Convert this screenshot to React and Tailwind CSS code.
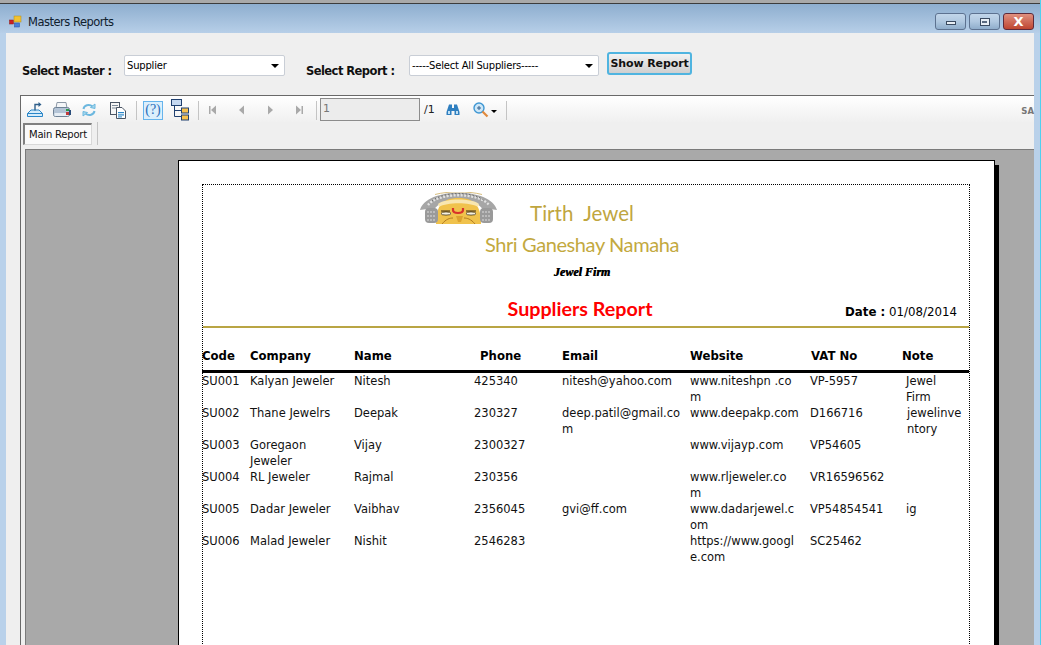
import React from 'react';

const uiFont = { fontFamily: '"DejaVu Sans", sans-serif' };

const rows = [
  { code: 'SU001', company: 'Kalyan Jeweler', name: 'Nitesh', phone: '425340', email: 'nitesh@yahoo.com', website: ['www.niteshpn .co', 'm'], vat: 'VP-5957', note: ['Jewel', 'Firm'], noteClass: 'pl-[4px]' },
  { code: 'SU002', company: 'Thane Jewelrs', name: 'Deepak', phone: '230327', email: ['deep.patil@gmail.co', 'm'], website: ['www.deepakp.com'], vat: 'D166716', note: ['jewelinve', 'ntory'], noteClass: 'pl-[5px]' },
  { code: 'SU003', company: ['Goregaon', 'Jeweler'], name: 'Vijay', phone: '2300327', email: '', website: ['www.vijayp.com'], vat: 'VP54605', note: [] },
  { code: 'SU004', company: 'RL Jeweler', name: 'Rajmal', phone: '230356', email: '', website: ['www.rljeweler.co', 'm'], vat: 'VR16596562', note: [] },
  { code: 'SU005', company: 'Dadar Jeweler', name: 'Vaibhav', phone: '2356045', email: 'gvi@ff.com', website: ['www.dadarjewel.c', 'om'], vat: 'VP54854541', note: ['ig'], noteClass: 'pl-[4px]' },
  { code: 'SU006', company: 'Malad Jeweler', name: 'Nishit', phone: '2546283', email: '', website: ['https://www.googl', 'e.com'], vat: 'SC25462', note: [] },
];

const gridCols = 'grid grid-cols-[48px_104px_120px_88px_128px_120px_92px_67px]';

const Lines = ({ value, className = '' }) => {
  const lines = Array.isArray(value) ? value : [value];
  return (
    <div className={`whitespace-nowrap ${className}`}>
      {lines.map((l, i) => <div key={i}>{l}</div>)}
    </div>
  );
};

const ComboBox = ({ label, width }) => (
  <div className={`${width} h-[21px] bg-white border border-[#c9ced6] rounded-[2px] flex items-start justify-between pl-[2px] pr-[5px] text-[10px] leading-[19px] text-black tracking-[-0.2px]`} style={uiFont}>
    <span>{label}</span>
    <span className="mt-[8px] w-0 h-0 border-l-[4px] border-r-[4px] border-t-[4px] border-l-transparent border-r-transparent border-t-black"></span>
  </div>
);

const CaptionButton = ({ w, children, red }) => (
  <div className={`${w} h-[17px] rounded-[3px] border flex items-center justify-center ${red ? 'border-[#5e2a3a] bg-gradient-to-b from-[#e0907f] via-[#cf6a58] to-[#bf4530]' : 'border-[#5d7290] bg-gradient-to-b from-[#c2d6ea] via-[#b0c8e0] to-[#8fadcb]'}`}>
    {children}
  </div>
);

const Separator = ({ className = '' }) => <div className={`w-px h-[19px] bg-[#c4c4c4] ${className}`}></div>;

const NavArrow = ({ dir, bar }) => (
  <svg width="10" height="12" viewBox="0 0 10 12" fill="#a9a9a9">
    {bar && dir === 'left' && <rect x="1" y="2" width="1.5" height="8" />}
    {dir === 'left' ? <path d="M8 1.5v9L3 6z" /> : <path d="M2 1.5v9L7 6z" />}
    {bar && dir === 'right' && <rect x="7.5" y="2" width="1.5" height="8" />}
  </svg>
);

const ExportIcon = () => (
  <svg width="18" height="18" viewBox="0 0 18 18" fill="none">
    <path d="M1.5 12.5 L5 9 H13 L16.5 12.5 V15.5 H1.5 Z" fill="#d6ecfa" stroke="#2a86c8" />
    <path d="M1.5 12.5 H16.5" stroke="#2a86c8" />
    <path d="M9 9.5 V3.5 H13" stroke="#2f5f8a" strokeWidth="1.4" />
    <path d="M12.5 1 L15.5 3.5 L12.5 6 Z" fill="#2f5f8a" />
  </svg>
);

const PrintIcon = () => (
  <svg width="20" height="18" viewBox="0 0 20 18">
    <path d="M5 1.5 H14 L15 7 H4 Z" fill="#f4f6f8" stroke="#8c98a6" />
    <rect x="1.5" y="6.5" width="16" height="9" rx="2" fill="#b4c4d6" stroke="#6f8296" />
    <rect x="2.5" y="12" width="14" height="3" fill="#e6edf4" />
    <rect x="14" y="8" width="3" height="2" fill="#2d9a4a" />
    <rect x="14" y="11" width="3" height="3" fill="#c23a3a" />
    <rect x="17" y="9" width="2" height="5" fill="#2b4f7c" />
  </svg>
);

const RefreshIcon = () => (
  <svg width="16" height="16" viewBox="0 0 16 16" fill="none" stroke="#6db8df" strokeWidth="2">
    <path d="M2.5 7 C3 3.5 8 1.5 11.5 4.5" />
    <path d="M13.5 9 C13 12.5 8 14.5 4.5 11.5" />
    <path d="M9.5 5.5 L14 6.5 L14 2 Z" fill="#a6d8ee" strokeWidth="1" />
    <path d="M6.5 10.5 L2 9.5 L2 14 Z" fill="#a6d8ee" strokeWidth="1" />
  </svg>
);

const CopyIcon = () => (
  <svg width="18" height="19" viewBox="0 0 18 19">
    <rect x="1.5" y="1.5" width="9" height="12" fill="#f6f6f6" stroke="#4a5564" />
    <rect x="3" y="4" width="6" height="1" fill="#7d8a98" />
    <rect x="3" y="6.5" width="6" height="1" fill="#7d8a98" />
    <path d="M7.5 6.5 H13 L16.5 10 V17.5 H7.5 Z" fill="#fff" stroke="#4a5564" />
    <rect x="9" y="11" width="6" height="1.2" fill="#2a86c8" />
    <rect x="9" y="13.3" width="6" height="1.2" fill="#2a86c8" />
    <rect x="9" y="15.4" width="4" height="1" fill="#2a86c8" />
  </svg>
);

const ParamIcon = () => (
  <div className="w-[20px] h-[19px] ml-px mr-[7px] border border-[#66b4ec] bg-[#dcefFC] flex items-center justify-center text-[14px] leading-none text-[#2a6db8]" style={{ fontFamily: '"Liberation Serif", serif' }}>(?)</div>
);

const TreeIcon = () => (
  <svg width="20" height="22" viewBox="0 0 20 22">
    <rect x="1.5" y="0.5" width="10" height="6" fill="#c5d8f0" stroke="#1f3f6e" />
    <path d="M4.5 6.5 V17.5 H11 M4.5 11.5 H11" stroke="#1f3f6e" fill="none" />
    <rect x="11.5" y="9" width="7" height="5" fill="#f7c14e" stroke="#1f3f6e" />
    <rect x="11.5" y="16" width="7" height="5" fill="#f7c14e" stroke="#1f3f6e" />
  </svg>
);

const BinocularsIcon = () => (
  <svg width="14" height="12" viewBox="0 0 14 12" fill="#2f7fc0">
    <path d="M3 0.5 H6 V4 H8 V0.5 H11 L13.5 8 V11 H8.5 V7 H5.5 V11 H0.5 V8 Z" />
    <rect x="2" y="7" width="2" height="3" fill="#bfe0f5" />
    <rect x="10" y="7" width="2" height="3" fill="#bfe0f5" />
  </svg>
);

const ZoomIcon = () => (
  <svg width="16" height="16" viewBox="0 0 16 16" fill="none">
    <circle cx="6" cy="6" r="5" fill="#cde7f8" stroke="#3f97d3" strokeWidth="1.4" />
    <path d="M4 6 H8 M6 4 V8" stroke="#35618c" />
    <path d="M9.5 9.5 L14.5 14.5" stroke="#e08a3e" strokeWidth="2.2" />
  </svg>
);

// rough drawing of the company emblem: silver arch round a golden face
const Emblem = () => (
  <svg width="78" height="32" viewBox="0 0 78 32">
    <path d="M0 18 C6 -5 71 -5 77 18 L70 17 L63 18 C56 4 21 4 14 18 L7 17 Z" fill="#a6a6a6" />
    <path d="M8 13 C18 0 59 0 69 13" stroke="#e2e2e2" strokeWidth="2.4" strokeDasharray="2 1.5" fill="none" />
    <path d="M12 9 C24 -1 53 -1 65 9" stroke="#6f6f6f" strokeWidth="1" strokeDasharray="1.5 2" fill="none" />
    <path d="M15 2.5 C28 -1 49 -1 62 2.5" stroke="#d9bf80" strokeWidth="1" fill="none" />
    <path d="M16 32 C16 14 22 6 38.5 6 C55 6 61 14 61 32 Z" fill="#f0c24c" />
    <path d="M18 12 C24 6 53 6 59 12 L58 15 C50 10 27 10 19 15 Z" fill="#f8e6b0" />
    <rect x="5" y="16" width="13" height="15" rx="4" fill="#9a9a9a" />
    <rect x="60" y="16" width="13" height="15" rx="4" fill="#9a9a9a" />
    <path d="M7 20 H16 M7 24 H16 M7 28 H16 M62 20 H71 M62 24 H71 M62 28 H71" stroke="#dcdcdc" strokeWidth="1.2" strokeDasharray="2 1" />
    <path d="M33 16 V18 C33 22 43 22 43 18 V16" stroke="#d8322a" strokeWidth="2.2" fill="none" />
    <path d="M21 19 H30 M46 19 H56" stroke="#3a2a14" strokeWidth="1.2" />
    <ellipse cx="26" cy="21.5" rx="5" ry="1.6" fill="#f6f0dc" stroke="#2a1f10" strokeWidth="0.7" />
    <ellipse cx="51" cy="21.5" rx="5" ry="1.6" fill="#f6f0dc" stroke="#2a1f10" strokeWidth="0.7" />
    <path d="M36 24 L38 30 L41 30 L43 24" fill="#dca22e" />
    <path d="M22 32 C26 27 30 26 33 26 M55 32 C51 27 47 26 44 26" stroke="#b07a20" fill="none" />
  </svg>
);

const App = () => {
  return (
    <div className="w-[1041px] h-[645px] overflow-hidden flex flex-col bg-[#b9d1ea] border-r border-[#4fd0f0]" style={uiFont}>
      <div className="h-[4px] bg-[#3c3c3c] border-t-[3px] border-[#a9a9a9] shrink-0"></div>

      {/* title bar */}
      <div className="h-[29px] shrink-0 bg-gradient-to-b from-[#8eaecf] to-[#b7cfe8] flex items-start justify-between pl-[9px] pr-[6px]">
        <div className="flex items-center gap-[5px] h-[24px] mt-[6px]">
          <svg width="14" height="14" viewBox="0 0 14 14">
            <rect x="0.5" y="5" width="4" height="4" fill="#cc2020" stroke="#8a1a1a" strokeWidth="0.5" />
            <rect x="5" y="1" width="7" height="6" fill="#f2c230" stroke="#b08a18" strokeWidth="0.5" />
            <rect x="5.5" y="8" width="5" height="4" fill="#4a7fd8" stroke="#2a4f98" strokeWidth="0.5" />
          </svg>
          <span className="text-[11.5px] text-[#10202f] tracking-[-0.5px] pt-[2px]">Masters Reports</span>
        </div>
        <div className="flex gap-[3px] mt-[9px]">
          <CaptionButton w="w-[31px]"><div className="w-[10px] h-[4px] mt-[3px] bg-[#e8eef4] border border-[#3a4a60]"></div></CaptionButton>
          <CaptionButton w="w-[31px]"><div className="w-[10px] h-[8px] border border-[#3a4a60] bg-[#e8eef4] flex items-center justify-center"><div className="w-[5px] h-[2px] bg-[#5a6a80]"></div></div></CaptionButton>
          <CaptionButton w="w-[31px]" red><span className="text-white font-bold text-[13px] leading-none">X</span></CaptionButton>
        </div>
      </div>

      <div className="flex-1 min-h-0 ml-[6px] mr-[6px] flex flex-col bg-[#efefef]">
        {/* filter row */}
        <div className="h-[62px] shrink-0 flex items-start pl-[16px]">
          <span className="mt-[30px] w-[102px] text-[11.5px] font-bold text-[#111] tracking-[-0.55px] whitespace-nowrap">Select Master :</span>
          <div className="mt-[22px]"><ComboBox label="Supplier" width="w-[161px]" /></div>
          <span className="mt-[30px] ml-[21px] w-[103px] text-[11.5px] font-bold text-[#111] tracking-[-0.55px] whitespace-nowrap">Select Report :</span>
          <div className="mt-[22px]"><ComboBox label="-----Select All Suppliers-----" width="w-[190px]" /></div>
          <button className="mt-[19px] ml-[8px] w-[85px] h-[23px] pt-px rounded-[3px] border-2 border-[#4fb4e0] bg-gradient-to-b from-[#f2f2f2] to-[#cfcfcf] text-[11px] font-bold text-[#111] tracking-[-0.1px] whitespace-nowrap">Show Report</button>
        </div>

        {/* report viewer */}
        <div className="flex-1 min-h-0 ml-[14px] flex flex-col border-l border-[#696969] border-t">
          <div className="h-[26px] shrink-0 bg-gradient-to-b from-[#ffffff] to-[#f0f0f0] flex items-center pl-[1px] pt-[2px] relative">
            <div className="w-[26px] flex justify-center"><ExportIcon /></div>
            <div className="w-[28px] flex justify-center"><PrintIcon /></div>
            <div className="w-[26px] flex justify-center"><RefreshIcon /></div>
            <div className="w-[32px] flex justify-center"><CopyIcon /></div>
            <Separator className="ml-[2px] mr-[5px]" />
            <ParamIcon />
            <TreeIcon />
            <Separator className="ml-[8px]" />
            <div className="w-[28px] flex justify-center"><NavArrow dir="left" bar /></div>
            <div className="w-[28px] flex justify-center"><NavArrow dir="left" /></div>
            <div className="w-[32px] flex justify-center"><NavArrow dir="right" /></div>
            <div className="w-[24px] flex justify-center"><NavArrow dir="right" bar /></div>
            <Separator className="ml-[5px]" />
            <div className="ml-[3px] -mt-[2px] w-[100px] h-[23px] border border-[#8c8c8c] bg-[#ececec] text-[11px] leading-[20px] pl-[2px] text-[#777]">1</div>
            <span className="ml-[4px] text-[11px] text-[#222]">/1</span>
            <div className="ml-[11px]"><BinocularsIcon /></div>
            <div className="ml-[13px]"><ZoomIcon /></div>
            <span className="ml-[2px] mt-[2px] w-0 h-0 border-l-[3px] border-r-[3px] border-t-[3px] border-l-transparent border-r-transparent border-t-black"></span>
            <Separator className="ml-[9px]" />
            <span className="absolute right-0 top-[9px] text-[8.5px] font-bold text-[#777] whitespace-nowrap">SA</span>
          </div>

          <div className="h-[27px] shrink-0 flex items-start pl-[2px]">
            <div className="mt-[1px] h-[22px] w-[69px] border-t-2 border-l-2 border-r border-b border-t-[#808080] border-l-[#808080] border-r-[#d8d8d8] border-b-[#d8d8d8] bg-[#fafafa] text-[10px] leading-[20px] text-center text-[#111] tracking-[-0.2px] whitespace-nowrap">Main Report</div>
            <div className="ml-[5px] w-px h-[23px] bg-[#c4c4c4]"></div>
          </div>

          {/* report canvas */}
          <div className="flex-1 min-h-0 ml-[4px] bg-[#a9a9a9] border-l border-t border-[#7a7a7a] overflow-hidden pl-[152px] pt-[10px]">
            <div className="w-[817px] h-[600px] bg-white border border-black shadow-[4px_5px_0_0_#000] pl-[23px] pt-[23px]">
              <div className="w-[768px] h-[560px] border border-dotted border-black">
                {/* header */}
                <div className="h-[143px] relative border-b-2 border-[#b9a544]">
                  <div className="absolute left-[217px] top-[7px]"><Emblem /></div>
                  <div className="pt-[12px] pr-[8px] flex flex-col items-center" style={{ fontFamily: 'Lato, sans-serif' }}>
                    <div className="h-[32px] text-[20.5px] leading-[32px] text-[#bfa63f] whitespace-nowrap">Tirth&nbsp; Jewel</div>
                    <div className="h-[28px] text-[20px] leading-[28px] text-[#c3a93f] whitespace-nowrap tracking-[-0.4px] mt-[1px]">Shri Ganeshay Namaha</div>
                    <div className="mt-[4px] h-[20px] text-[12px] leading-[20px] font-bold italic text-black whitespace-nowrap [text-shadow:0.5px_0_0_#000]" style={{ fontFamily: '"Liberation Serif", serif' }}>Jewel Firm</div>
                    <div className="mt-[13px] mr-[4px] h-[28px] text-[19.7px] leading-[28px] font-bold text-[#ff0000] whitespace-nowrap">Suppliers Report</div>
                  </div>
                  <div className="absolute right-[12px] top-[119px] text-[11.8px] leading-[16px] text-black whitespace-nowrap"><b className="font-bold">Date :</b> 01/08/2014</div>
                </div>

                {/* table */}
                <div className={`${gridCols} -ml-px h-[45px] items-start pt-[20px] border-b-[3px] border-black text-[11.7px] leading-[16px] font-bold text-black`}>
                  <div>Code</div>
                  <div>Company</div>
                  <div>Name</div>
                  <div className="pl-[6px]">Phone</div>
                  <div>Email</div>
                  <div>Website</div>
                  <div className="pl-[1px]">VAT No</div>
                  <div>Note</div>
                </div>
                {rows.map((row) => (
                  <div key={row.code} className={`${gridCols} -ml-px h-[32px] text-[11.5px] leading-[16px] text-[#111]`}>
                    <Lines value={row.code} />
                    <Lines value={row.company} />
                    <Lines value={row.name} />
                    <Lines value={row.phone} />
                    <Lines value={row.email} />
                    <Lines value={row.website} />
                    <Lines value={row.vat} />
                    <Lines value={row.note} className={row.noteClass || ''} />
                  </div>
                ))}
              </div>
            </div>
          </div>
        </div>
      </div>
    </div>
  );
};

export default App;
